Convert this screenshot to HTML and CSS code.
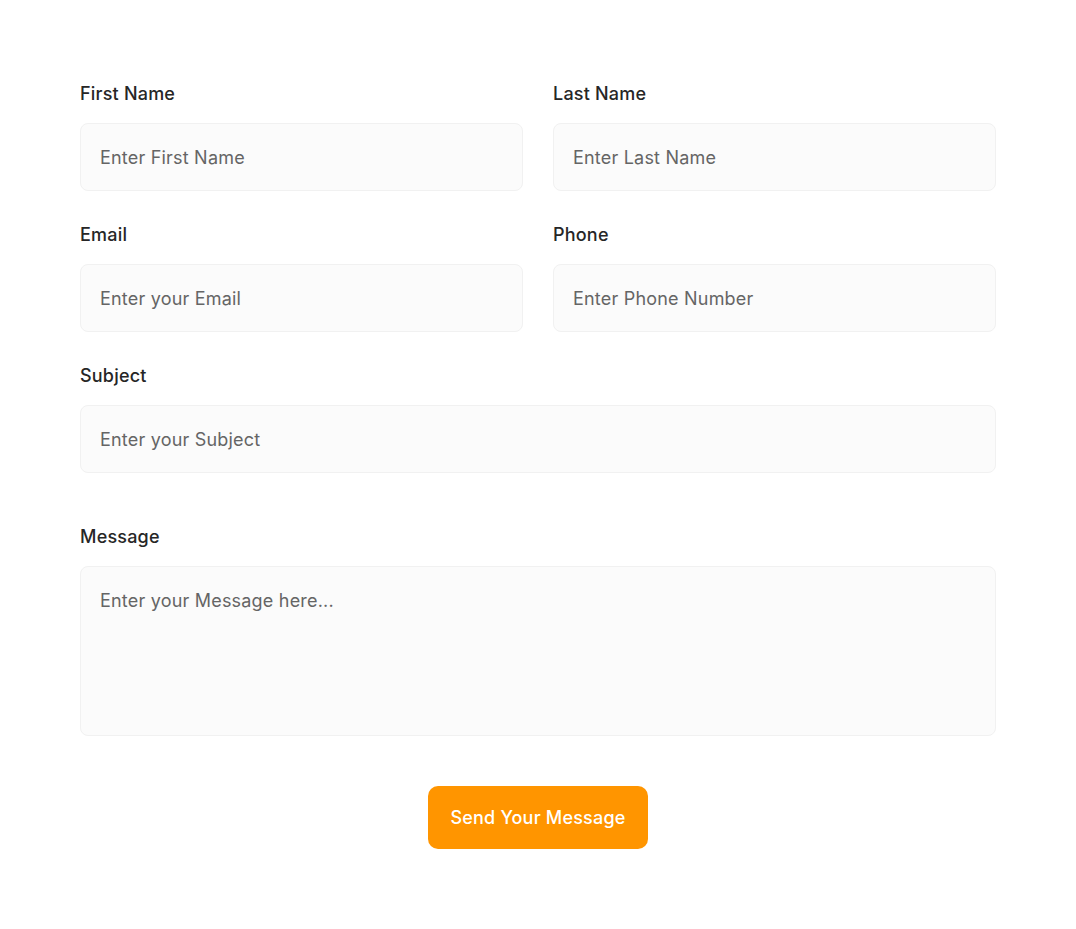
FILE: index.html
```html
<!DOCTYPE html>
<html lang="en">
<head>
<meta charset="utf-8">
<title>Contact Form</title>
<link rel="stylesheet" href="styles.css">
</head>
<body>
<form class="form">
  <div class="row two">
    <div class="field">
      <label class="label">First Name</label>
      <input class="input" type="text" placeholder="Enter First Name">
    </div>
    <div class="field">
      <label class="label">Last Name</label>
      <input class="input" type="text" placeholder="Enter Last Name">
    </div>
  </div>
  <div class="row two">
    <div class="field">
      <label class="label">Email</label>
      <input class="input" type="text" placeholder="Enter your Email">
    </div>
    <div class="field">
      <label class="label">Phone</label>
      <input class="input" type="text" placeholder="Enter Phone Number">
    </div>
  </div>
  <div class="row">
    <div class="field">
      <label class="label">Subject</label>
      <input class="input" type="text" placeholder="Enter your Subject">
    </div>
  </div>
  <div class="row message-row">
    <div class="field">
      <label class="label">Message</label>
      <textarea class="input textarea" placeholder="Enter your Message here..."></textarea>
    </div>
  </div>
  <div class="actions">
    <button class="button" type="button">Send Your Message</button>
  </div>
</form>
</body>
</html>
```
FILE: styles.css
```css
* { box-sizing: border-box; }
html, body { margin: 0; background: #ffffff; }
body {
  font-family: Inter, "Noto Sans", sans-serif;
  color: #262626;
}
.form {
  width: 916px;
  margin: 0 auto;
  padding-top: 80px;
  display: flex;
  flex-direction: column;
}
.row { display: grid; grid-template-columns: 1fr; gap: 30px; margin-bottom: 30px; }
.row.two { grid-template-columns: 1fr 1fr; }
.message-row { margin-top: 20px; margin-bottom: 50px; }
.field { display: flex; flex-direction: column; gap: 16px; }
.label {
  font-size: 18px;
  line-height: 27px;
  font-weight: 500;
  letter-spacing: 0.2px;
  color: #262626;
}
.input {
  height: 68px;
  padding: 0 19px;
  border: 1px solid #f1f1f1;
  border-radius: 8px;
  background: #fbfbfb;
  font-family: inherit;
  font-size: 18px;
  letter-spacing: 0.2px;
  color: #262626;
  outline: none;
}
.input::placeholder { color: #656565; }
.textarea {
  height: 170px;
  padding: 20px 19px;
  resize: none;
  line-height: 27px;
}
.actions { display: flex; justify-content: center; }
.button {
  width: 220px;
  height: 63px;
  border: none;
  border-radius: 10px;
  background: #ff9500;
  color: #ffffff;
  font-family: inherit;
  font-size: 18px;
  font-weight: 500;
  letter-spacing: 0.2px;
  cursor: pointer;
}
```
